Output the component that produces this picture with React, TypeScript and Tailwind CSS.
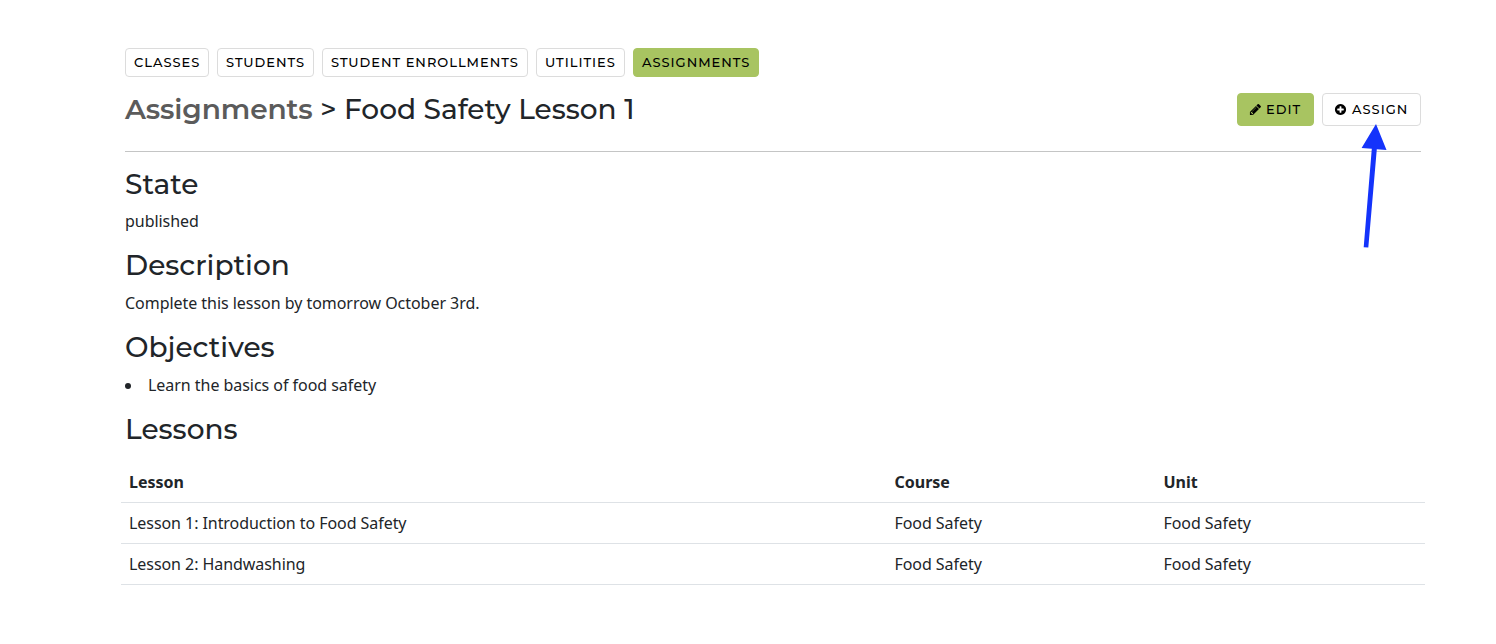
import clsx from 'clsx'
import { ReactNode } from 'react'

const tabs = [
  { label: 'Classes', width: 'w-[84px]' },
  { label: 'Students', width: 'w-[97px]' },
  { label: 'Student Enrollments', width: 'w-[206px]' },
  { label: 'Utilities', width: 'w-[89px]' },
  { label: 'Assignments', width: 'w-[126px]', active: true },
]

const lessons = [
  {
    lesson: 'Lesson 1: Introduction to Food Safety',
    course: 'Food Safety',
    unit: 'Food Safety',
  },
  {
    lesson: 'Lesson 2: Handwashing',
    course: 'Food Safety',
    unit: 'Food Safety',
  },
]

export default function App() {
  return (
    <div className="min-h-[644px] bg-white pl-[125px] pt-12 font-['Noto_Sans',sans-serif] text-base text-[#212529]">
      <div className="w-[1296px]">
        <nav className="flex gap-2">
          {tabs.map(({ label, width, active }) => (
            <button
              key={label}
              className={clsx(
                "flex h-[29px] items-center whitespace-nowrap rounded-[4px] border px-2 font-['Montserrat','Inter',sans-serif] text-[13px] font-medium uppercase tracking-[0.98px] text-black",
                width,
                active
                  ? 'border-[#a8c461] bg-[#a8c461]'
                  : 'border-[#dcdcdc] bg-white',
              )}
            >
              <span>{label}</span>
            </button>
          ))}
        </nav>

        <header className="mt-4 flex h-[59px] items-start justify-between border-b border-[#c4c5c5]">
          <h1 className="flex h-8 items-center whitespace-pre font-['Montserrat','Inter',sans-serif] text-[28px] font-medium">
            <a className="font-semibold tracking-[-0.1px] text-[#5b5b5b]">
              Assignments
            </a>
            <span>{' > Food Safety Lesson 1'}</span>
          </h1>
          <div className="flex gap-2">
            <ActionButton className="w-[77px] gap-1 border-[#a8c461] bg-[#a8c461]">
              <PencilIcon />
              <span>Edit</span>
            </ActionButton>
            <div className="relative">
              <ActionButton className="w-[99px] gap-[5px] border-[#dcdcdc] bg-white">
                <PlusCircleIcon />
                <span>Assign</span>
              </ActionButton>
              <Pointer />
            </div>
          </div>
        </header>

        <main className="pt-[15.75px]">
          <Section title="State">
            <p>published</p>
          </Section>
          <Section title="Description">
            <p>Complete this lesson by tomorrow October 3rd.</p>
          </Section>
          <Section title="Objectives">
            <ul>
              <li className="flex items-center">
                <span className="mr-[17px] mt-0.5 size-1.5 rounded-full bg-[#212529]" />
                <span>Learn the basics of food safety</span>
              </li>
            </ul>
          </Section>
          <Heading>Lessons</Heading>

          <table className="-mx-1 mt-[15.5px] w-[1304px] table-fixed border-collapse text-left">
            <thead>
              <tr className="h-[41px] border-b border-[#dee2e6]">
                <th className="w-[765.500px] px-2 font-bold">Lesson</th>
                <th className="w-[269px] px-2 font-bold">Course</th>
                <th className="px-2 font-bold">Unit</th>
              </tr>
            </thead>
            <tbody className="tracking-[-0.06px]">
              {lessons.map(({ lesson, course, unit }) => (
                <tr key={lesson} className="h-[41px] border-b border-[#dee2e6]">
                  <td className="px-2">{lesson}</td>
                  <td className="px-2">{course}</td>
                  <td className="px-2">{unit}</td>
                </tr>
              ))}
            </tbody>
          </table>
        </main>
      </div>
    </div>
  )
}

const Heading = ({ children }: { children: ReactNode }) => (
  <h2 className="font-['Montserrat','Inter',sans-serif] text-[28px] font-medium leading-[33.6px]">
    {children}
  </h2>
)

const Section = ({
  title,
  children,
}: {
  title: string
  children: ReactNode
}) => (
  <section className="mb-4">
    <Heading>{title}</Heading>
    <div className="mt-2 leading-6 tracking-[-0.04px]">{children}</div>
  </section>
)

const ActionButton = ({
  className,
  children,
}: {
  className: string
  children: ReactNode
}) => (
  <button
    className={clsx(
      "flex h-[33px] items-center whitespace-nowrap rounded-[4px] border pl-[11px] font-['Montserrat','Inter',sans-serif] text-[13px] font-medium uppercase tracking-[1px] text-black",
      className,
    )}
  >
    {children}
  </button>
)

const PencilIcon = () => (
  <svg viewBox="0 0 1792 1792" className="size-[13px]" fill="currentColor">
    <path d="M491 1536l91-91-235-235-91 91v107h128v128h107zm523-928q0-22-22-22-10 0-17 7l-542 542q-7 7-7 17 0 22 22 22 10 0 17-7l542-542q7-7 7-17zm-54-192l416 416-832 832h-416v-416zm683 96q0 53-37 90l-166 166-416-416 166-165q36-38 90-38 53 0 91 38l235 234q37 39 37 91z" />
  </svg>
)

const PlusCircleIcon = () => (
  <svg viewBox="0 0 1792 1792" className="size-[13px]" fill="currentColor">
    <path d="M1344 960v-128q0-26-19-45t-45-19h-256v-256q0-26-19-45t-45-19h-128q-26 0-45 19t-19 45v256h-256q-26 0-45 19t-19 45v128q0 26 19 45t45 19h256v256q0 26 19 45t45 19h128q26 0 45-19t19-45v-256h256q26 0 45-19t19-45zm320-64q0 209-103 385.500t-279.500 279.500-385.500 103-385.500-103-279.500-279.500-103-385.500 103-385.500 279.500-279.500 385.500-103 385.500 103 279.500 279.500 103 385.500z" />
  </svg>
)

// Arrow laid over the page, pointing up at the assign button
const Pointer = () => (
  <svg
    viewBox="0 0 30 126"
    className="absolute left-[38px] top-[30px] h-[126px] w-[30px]"
    fill="#1433fb"
  >
    <path d="M16 1L26.500 27L16.800 26.300L8.300 124.600L3.700 124.200L11.800 25.800L1.600 25Z" />
  </svg>
)
